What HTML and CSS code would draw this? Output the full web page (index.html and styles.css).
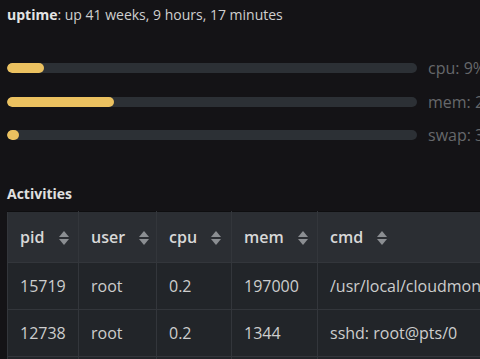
FILE: index.html
```html
<!DOCTYPE html>
<html lang="en">
<head>
  <meta charset="UTF-8">
  <title>Server status</title>
  <link rel="stylesheet" href="styles.css">
</head>
<body>
  <div class="page">
    <p class="uptime"><b>uptime</b>: up 41 weeks, 9 hours, 17 minutes</p>

    <div class="meters">
      <div class="meter">
        <div class="track"><div class="fill" style="width: 9%"></div></div>
        <span class="label">cpu: 9%</span>
      </div>
      <div class="meter">
        <div class="track"><div class="fill" style="width: 26%"></div></div>
        <span class="label">mem: 26%</span>
      </div>
      <div class="meter">
        <div class="track"><div class="fill" style="width: 3%"></div></div>
        <span class="label">swap: 3%</span>
      </div>
    </div>

    <h3 class="title">Activities</h3>

    <table class="activities">
      <thead>
        <tr>
          <th class="c-pid">pid <svg class="sort" viewBox="0 0 10 14"><path d="M5 0L10 6H0z"/><path d="M0 8H10L5 14z"/></svg></th>
          <th class="c-user">user <svg class="sort" viewBox="0 0 10 14"><path d="M5 0L10 6H0z"/><path d="M0 8H10L5 14z"/></svg></th>
          <th class="c-cpu">cpu <svg class="sort" viewBox="0 0 10 14"><path d="M5 0L10 6H0z"/><path d="M0 8H10L5 14z"/></svg></th>
          <th class="c-mem">mem <svg class="sort" viewBox="0 0 10 14"><path d="M5 0L10 6H0z"/><path d="M0 8H10L5 14z"/></svg></th>
          <th class="c-cmd">cmd <svg class="sort" viewBox="0 0 10 14"><path d="M5 0L10 6H0z"/><path d="M0 8H10L5 14z"/></svg></th>
        </tr>
      </thead>
      <tbody>
        <tr>
          <td>15719</td>
          <td>root</td>
          <td>0.2</td>
          <td>197000</td>
          <td>/usr/local/cloudmonitor/jre/bin/java</td>
        </tr>
        <tr>
          <td>12738</td>
          <td>root</td>
          <td>0.2</td>
          <td>1344</td>
          <td>sshd: root@pts/0</td>
        </tr>
        <tr>
          <td>1</td>
          <td>root</td>
          <td>0.0</td>
          <td>1012</td>
          <td>/sbin/init</td>
        </tr>
      </tbody>
    </table>
  </div>
</body>
</html>
```

FILE: styles.css
```css
* {
  margin: 0;
  padding: 0;
  box-sizing: border-box;
}

html, body {
  background: #141316;
  overflow: hidden;
}

body {
  font-family: "Open Sans", "Noto Sans", sans-serif;
  color: #d2d2d2;
  height: 359px;
}

.page {
  width: 700px;
  padding: 5px 7px 0;
}

.uptime {
  font-size: 14px;
  line-height: 20px;
  color: #cfcfcf;
}

.uptime b {
  font-weight: 700;
  color: #e4e4e4;
}

.meters {
  margin-top: 33px;
  display: flex;
  flex-direction: column;
  gap: 13.5px;
}

.meter {
  display: flex;
  align-items: center;
  height: 20px;
}

.track {
  width: 410px;
  height: 10px;
  border-radius: 5px;
  background: #2c3035;
  overflow: hidden;
}

.fill {
  height: 100%;
  min-width: 12px;
  border-radius: 5px;
  background: #ebc160;
}

.label {
  margin-left: 11px;
  font-size: 16px;
  color: #66686b;
}

.title {
  margin-top: 39px;
  font-size: 14px;
  line-height: 20px;
  font-weight: 700;
  color: #e0e0e0;
}

.activities {
  margin-top: 7px;
  border-collapse: collapse;
  table-layout: fixed;
  width: 700px;
  font-size: 16px;
}

.activities th,
.activities td {
  text-align: left;
  padding: 0 12px;
  border: 1px solid #33363b;
  white-space: nowrap;
  overflow: hidden;
}

.activities th {
  height: 51px;
  background: #2b2e33;
  font-weight: 600;
  color: #d8d8d8;
}

.activities td {
  height: 47px;
  background: #222529;
  color: #cdcdcd;
}

.activities tr:first-child th {
  border-top-color: #0e0e10;
}

.c-pid { width: 71px; }
.c-user { width: 78px; }
.c-cpu { width: 75px; }
.c-mem { width: 86px; }

.sort {
  width: 10px;
  height: 14px;
  margin-left: 10px;
  vertical-align: -2px;
  fill: #8b8e92;
}
```
